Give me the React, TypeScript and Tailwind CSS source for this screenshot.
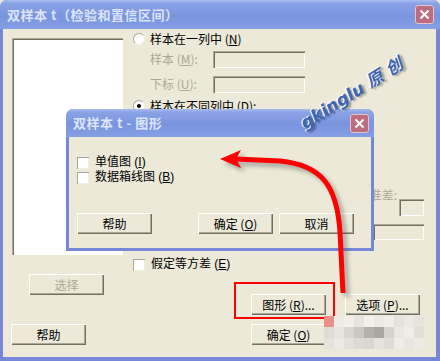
import React from "react";

const font = "font-['SimSun','Noto_Sans_CJK_SC',sans-serif]";

function Btn({
  children,
  className = "",
  disabled = false,
}: {
  children: React.ReactNode;
  className?: string;
  disabled?: boolean;
}) {
  return (
    <div
      className={`h-[21px] w-[75px] shrink-0 flex items-center justify-center bg-[#ece9d8] shadow-[inset_1px_1px_0_#ffffff,inset_-1px_-1px_0_#716f64,inset_-2px_-2px_0_#aca899] text-[12px] leading-none ${
        disabled ? "text-[#aca899]" : "text-black"
      } ${className}`}
    >
      {children}
    </div>
  );
}

function Box({ className = "" }: { className?: string }) {
  return (
    <div
      className={`shrink-0 bg-[#ece9d8] shadow-[inset_1px_1px_0_#aca899,inset_2px_2px_0_#716f64,inset_-1px_-1px_0_#ffffff] ${className}`}
    />
  );
}

function Check({ label }: { label: React.ReactNode }) {
  return (
    <div className="flex items-center h-[15px]">
      <div className="size-[12px] bg-white shadow-[inset_1px_1px_0_#aca899,inset_-1px_-1px_0_#f1efe2]" />
      <span className="ml-[6px] font-['Liberation_Sans','Noto_Sans_CJK_SC',sans-serif] text-[12px] leading-[15px] text-black whitespace-nowrap">
        {label}
      </span>
    </div>
  );
}

function Radio({ label, on = false }: { label: React.ReactNode; on?: boolean }) {
  return (
    <div className="flex items-center h-[12px]">
      <div className="size-[12px] rounded-full bg-white border border-t-[#aca899] border-l-[#aca899] border-r-[#f1efe2] border-b-[#f1efe2] flex items-center justify-center">
        {on && <div className="size-[4px] rounded-full bg-black" />}
      </div>
      <span className="ml-[5px] text-[12px] leading-none text-black whitespace-nowrap">{label}</span>
    </div>
  );
}

function Close({ className = "" }: { className?: string }) {
  return (
    <div
      className={`size-[19px] rounded-[3px] bg-[#bc6d80] border border-[#e6c2ca] flex items-center justify-center ${className}`}
    >
      <svg width="11" height="11" viewBox="0 0 11 11">
        <path d="M1.5 1.5 L9.5 9.5 M9.5 1.5 L1.5 9.5" stroke="#ffffff" strokeWidth="2" />
      </svg>
    </div>
  );
}

function TitleBar({ title, h, closeCls }: { title: string; h: string; closeCls: string }) {
  return (
    <div
      className={`${h} shrink-0 flex items-center justify-between rounded-t-[7px] bg-[linear-gradient(#a9bdf0,#8aa2e6_12%,#7a94de_55%,#86a0e6)]`}
    >
      <span className="pl-[7px] text-[13px] font-bold text-[#dbe5f9] whitespace-pre tracking-[0.5px]">
        {title}
      </span>
      <Close className={closeCls} />
    </div>
  );
}

const mosaic = [
  ["#ea9088", "#eeece5", "#f1efe9", "#e6e4dc", "#f3f1eb", "#eceae2", "#f0eee8", "#e4e2da", "#ebe9e1", "#e6e4dc"],
  ["#dedcd4", "#e6e4dc", "#d8d6ce", "#c9c7c0", "#b3b1ab", "#a9a7a2", "#d5d3cb", "#e9e7df", "#efede7", "#e1dfd7"],
  ["#e4e2da", "#ecebe3", "#e2e0d8", "#dcdad2", "#d9d7cf", "#e5e3db", "#dedcd4", "#efede5", "#e8e6de", "#ecebe3"],
];

export default function App() {
  return (
    <div className={`relative w-[440px] h-[361px] overflow-hidden bg-[#ece9d8] ${font}`}>
      {/* 主窗口 */}
      <div className="w-full h-full flex flex-col bg-[#7787d8] rounded-t-[7px]">
        <TitleBar title="双样本 t（检验和置信区间）" h="h-[29px]" closeCls="mr-[6px]" />
        <div className="flex-1 mx-[3px] mr-[4px] mb-[4px] flex flex-col bg-[#ece9d8]">
          <div className="flex">
            {/* 列表 */}
            <div className="w-[130px] shrink-0 flex flex-col">
              <div className="ml-[9px] mt-[9px] w-[111px] h-[217px] bg-white shadow-[inset_1px_1px_0_#aca899,inset_2px_2px_0_#716f64,inset_-1px_-1px_0_#ffffff]" />
              <Btn disabled className="ml-[26px] mt-[19px]">选择</Btn>
            </div>

            <div className="flex-1 flex flex-col pt-[4px]">
              <Radio label={<>样本在一列中 (<u>N</u>)</>} />
              <div className="mt-[5px] flex items-center">
                <span className="ml-[17px] w-[63px] text-[12px] text-[#aca899]">样本 (<u>M</u>):</span>
                <Box className="w-[92px] h-[17px]" />
              </div>
              <div className="mt-[7px] flex items-center">
                <span className="ml-[17px] w-[63px] text-[12px] text-[#aca899]">下标 (<u>U</u>):</span>
                <Box className="w-[92px] h-[17px]" />
              </div>
              <div className="mt-[7px]">
                <Radio on label={<>样本在不同列中 (<u>D</u>):</>} />
              </div>

              {/* 被遮住的汇总数据 */}
              <div className="mt-[77px] h-[51px] flex flex-col items-end pr-[12px]">
                <div className="flex items-start">
                  <span className="text-[12px] leading-[12px] text-[#aca899]">标准差:</span>
                  <Box className="ml-[2px] mt-[10px] w-[25px] h-[17px]" />
                </div>
                <Box className="mt-[8px] w-[51px] h-[16px]" />
              </div>

              <div className="mt-[17px]">
                <Check label={<>假定等方差 (<u>E</u>)</>} />
              </div>
              <div className="mt-[22px] flex">
                <Btn className="ml-[118px]">图形 (<u>R</u>)...</Btn>
                <Btn className="ml-[19px]">选项 (<u>P</u>)...</Btn>
              </div>
            </div>
          </div>

          <div className="mt-[9px] flex">
            <Btn className="ml-[8px]">帮助</Btn>
            <Btn className="ml-[165px]">确定 (<u>O</u>)</Btn>
            <Btn className="ml-[19px]">取消</Btn>
          </div>
        </div>
      </div>

      {/* 红框 */}
      <div className="absolute left-[234px] top-[282px] w-[101px] h-[37px] border-2 border-[#ff0000]" />

      {/* 马赛克 */}
      <div className="absolute left-[324px] top-[316px] grid grid-cols-[repeat(10,10px)] grid-rows-[repeat(3,11px)]">
        {mosaic.flat().map((c, i) => (
          <div key={i} style={{ background: c }} />
        ))}
      </div>

      {/* 图形 对话框 */}
      <div className="absolute left-[66px] top-[109px] w-[308px] h-[142px] flex flex-col bg-[#7787d8] rounded-t-[7px]">
        <TitleBar title="双样本 t - 图形" h="h-[28px]" closeCls="mr-[5px]" />
        <div className="flex-1 mx-[3px] mb-[3px] flex flex-col bg-[#ece9d8]">
          <div className="ml-[8px] mt-[18px] flex flex-col">
            <Check label={<>单值图 (<u>I</u>)</>} />
            <Check label={<>数据箱线图 (<u>B</u>)</>} />
          </div>
          <div className="mt-[28px] flex">
            <Btn className="ml-[8px]">帮助</Btn>
            <Btn className="ml-[46px]">确定 (<u>O</u>)</Btn>
            <Btn className="ml-[6px]">取消</Btn>
          </div>
        </div>
      </div>

      {/* 水印 */}
      <div className="absolute left-[352px] top-[94px]">
        <div className="-translate-x-1/2 -translate-y-1/2 rotate-[-32deg] whitespace-nowrap font-['DejaVu_Sans','Noto_Sans_CJK_SC',sans-serif] text-[17px] font-bold italic text-[#3d66b4] [text-shadow:-1px_-1px_0_#ffffff,2px_2px_2px_rgba(0,0,0,0.35)]">
          gkinglu 原 创
        </div>
      </div>

      {/* 红色箭头 */}
      <svg className="absolute inset-0 pointer-events-none" width="440" height="361" viewBox="0 0 440 361">
        <defs>
          <filter id="sh" x="-20%" y="-20%" width="140%" height="140%">
            <feGaussianBlur stdDeviation="2" />
          </filter>
        </defs>
        <g transform="translate(4 4)" opacity="0.45" filter="url(#sh)">
          <path d="M343 293 L340 232 C337 186 322 165 280 161 L238 159" fill="none" stroke="#555" strokeWidth="5" />
          <path d="M220 159 L241 150 L236 159 L241 168 Z" fill="#555" />
        </g>
        <path d="M343 293 L340 232 C337 186 322 165 280 161 L236 159" fill="none" stroke="#ff0000" strokeWidth="5" />
        <path d="M220 159 L241 150 L236 159 L241 168 Z" fill="#ff0000" />
      </svg>
    </div>
  );
}
